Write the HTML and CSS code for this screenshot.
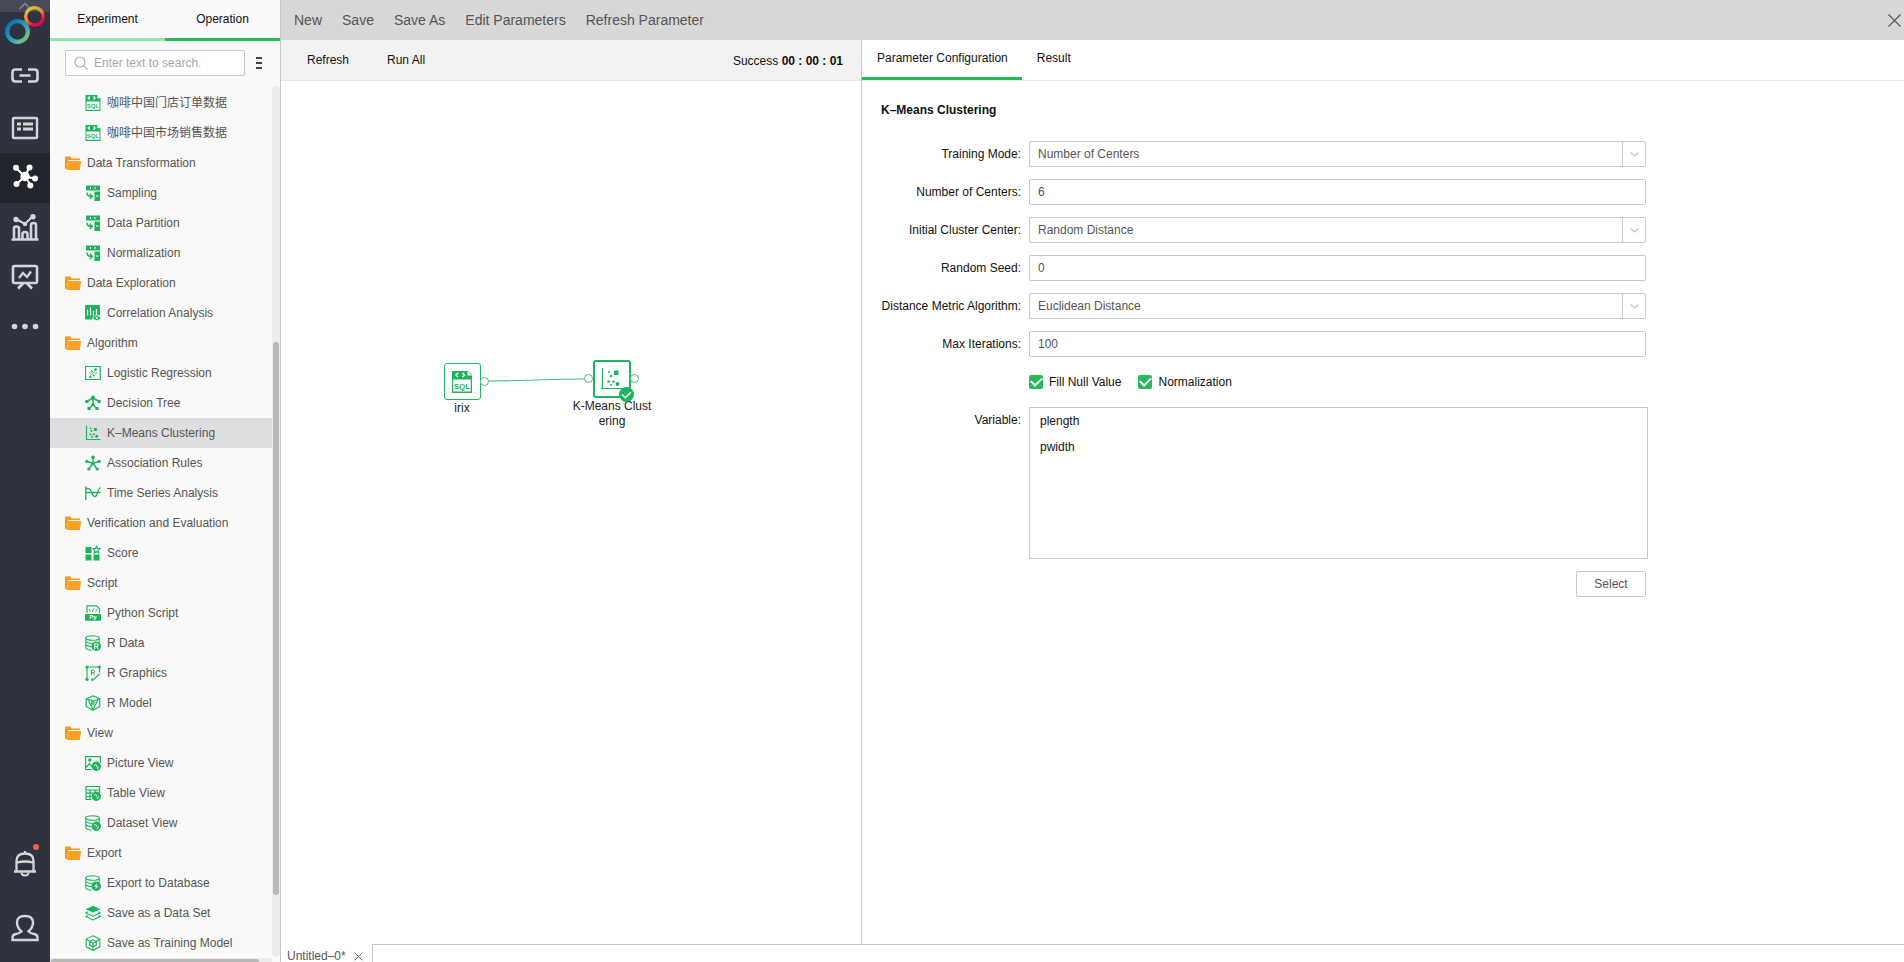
FILE: index.html
```html
<!DOCTYPE html>
<html lang="en">
<head>
<meta charset="utf-8">
<title>Experiment</title>
<link rel="stylesheet" href="styles.css">
</head>
<body>
<svg class="sprite" aria-hidden="true">
  <symbol id="folder" viewBox="0 0 16 16"><path fill="#f59a1a" d="M0 1.500h5.500l1 2H15v1.600H3.500L1.600 14H0z"/><path fill="#ffa01e" d="M3.600 6H16.200l-1.400 9H1.600z"/></symbol>
  <symbol id="sql" viewBox="0 0 16 16"><path fill="#1eb45c" d="M.5 0H12l3.500 3.500V16H.5V0z"/><path fill="#fff" d="M1.500 6.500h13v8.300h-13zM12.300 0l3.200 3.200h-3.200z"/><path d="M4.800 1.500 3.200 3l1.600 1.500M8.500 1.500 10.100 3 8.500 4.500" stroke="#fff" fill="none" stroke-width="1.200"/><text x="8" y="13" text-anchor="middle" class="tiny">SQL</text></symbol>
  <symbol id="transform" viewBox="0 0 16 16"><path fill="#1eb45c" d="M1 .5h14v5H1zM9.500 6.500H15V16H9.500z"/><path stroke="#f9f9f9" d="M5.500 2v2M10 2v2M11 11h2.500"/><path d="M2 7.500c0 3 1.500 4 4.500 4M4.800 8.800l2.500 2.700-2.500 2.500" stroke="#1eb45c" stroke-width="1.500" fill="none"/></symbol>
  <symbol id="correlation" viewBox="0 0 16 16"><path fill="#1eb45c" d="M1 0h13q1 0 1 1V10L8 12l-1 2.500H1q-1 0-1-1V1q0-1 1-1z"/><path stroke="#f9f9f9" d="M2.500 4.500v6M5.500 2.500v8M8.500 6v4.500M11.500 4v6" stroke-width="1.200"/><path fill="#1eb45c" stroke="#f9f9f9" stroke-width=".7" d="M7.500 13q4.300-5 8.500 0-4.200 5-8.500 0z"/><circle cx="11.800" cy="13" r="1" fill="#f9f9f9"/></symbol>
  <symbol id="logistic" viewBox="0 0 16 16" fill="#1eb45c"><path d="M.5 1.500h14.800v13H.5z" fill="none" stroke="#1eb45c" stroke-width="1.200"/><path d="m4 12.500 7.500-8.500" stroke="#1eb45c" fill="none" stroke-width=".8"/><circle cx="5" cy="8" r=".8"/><circle cx="7" cy="6.500" r=".9"/><circle cx="10.500" cy="4.500" r="1.300"/><circle cx="8.500" cy="10.500" r=".9"/><circle cx="11" cy="8" r=".8"/><circle cx="5.500" cy="12" r="1.100"/></symbol>
  <symbol id="tree" viewBox="0 0 16 16"><path d="M8 3 1.800 6.500M8 3l6.200 3.500M8 2v8M8 9.500 4 14M8 9.500l4 4.500" stroke="#1eb45c" stroke-width="1.500" fill="none"/><g fill="#1eb45c"><circle cx="8" cy="2.300" r="1.900"/><circle cx="1.800" cy="6.500" r="1.700"/><circle cx="14.200" cy="6.500" r="1.700"/><circle cx="8" cy="9.500" r="1.600"/><path d="M2.500 12h3v3h-3zM10.500 12h3v3h-3z"/></g></symbol>
  <symbol id="kmeans" viewBox="0 0 16 16" fill="#1eb45c"><path d="M1.500 .500v14H15.500" fill="none" stroke="#1eb45c" stroke-width="1.200"/><path d="M8.800 3h3v3h-3z"/><circle cx="5.600" cy="3.300" r=".9"/><circle cx="6.500" cy="6" r="1"/><circle cx="5.500" cy="9.500" r="1"/><circle cx="8.800" cy="9.300" r="1.100"/><circle cx="7" cy="12" r=".9"/><circle cx="11.800" cy="11.300" r="1.500"/></symbol>
  <symbol id="assoc" viewBox="0 0 16 16"><path d="M8 2v6M1.800 6.500 8 8.300l6.200-1.800M4 14l4-5.700L12 14" stroke="#1eb45c" stroke-width="1.500" fill="none"/><g fill="#1eb45c"><circle cx="8" cy="2.200" r="1.800"/><circle cx="1.800" cy="6.300" r="1.600"/><circle cx="14.200" cy="6.300" r="1.600"/><circle cx="8" cy="8.300" r="1.700"/><circle cx="3.800" cy="14" r="1.600"/><circle cx="12.200" cy="14" r="1.600"/></g></symbol>
  <symbol id="series" viewBox="0 0 16 16"><path d="M.8 1.500v13.500M.8 7.500H15.500M1 4q3.500-2 5.500 3t3.500 4.500q1.500 0 3-5 .8-3 2.500-4" stroke="#1eb45c" stroke-width="1.400" fill="none"/></symbol>
  <symbol id="score" viewBox="0 0 16 16"><path fill="#1eb45c" d="M.5 2h6v6h-6zM.5 9.500h6v6h-6zM8.500 9.500h6v6h-6z"/><path d="m11.500 1.200 1 2.200 2.500.3-1.800 1.700.5 2.400-2.200-1.200-2.200 1.200.5-2.400L8 3.700l2.500-.3z" stroke="#1eb45c" stroke-width="1.200" fill="none"/></symbol>
  <symbol id="python" viewBox="0 0 16 16"><path d="M2 8V.8h9.500L14.500 4v4" stroke="#1eb45c" fill="none" stroke-width="1.200"/><path fill="#1eb45c" d="M0 9h16v6q0 .8-.8.800H.8Q0 15.800 0 15z"/><path d="M5.500 3.800 4 5.300l1.500 1.500M10.500 3.800 12 5.300l-1.500 1.500M8.700 3.500 7.300 7" stroke="#1eb45c" fill="none"/><text x="8" y="14" text-anchor="middle" class="tiny tiny-light">Py</text></symbol>
  <symbol id="db" viewBox="0 0 16 16"><g fill="none" stroke="#1eb45c" stroke-width="1.100"><ellipse cx="7.500" cy="3" rx="6.700" ry="2.300"/><path d="M.8 3v10q1.500 2 5.700 2.200M14.200 3v4.500M.8 6.300q2.200 2.200 6.700 2.200M.8 9.600q1.500 1.900 5.700 2"/></g></symbol>
  <symbol id="rdata" viewBox="0 0 16 16"><use href="#db"/><circle cx="11.200" cy="11.200" r="4.800" fill="#1eb45c"/><path d="M9.700 14V8.700h2q1.500 0 1.500 1.400t-1.500 1.300h-2M11.500 11.400 13.200 14" fill="none" stroke="#f9f9f9" stroke-width="1.100"/></symbol>
  <symbol id="rgraph" viewBox="0 0 16 16"><path d="M2 2h12.500M2 2v12.500M14.500 2v5.500M8.500 14.500 14.500 9" stroke="#1eb45c" fill="none" stroke-width="1.200"/><path d="M6.500 9.800V5.200h1.700q1.300 0 1.300 1.200T8.200 7.600H6.500M8 7.600l1.700 2.200" fill="none" stroke="#1eb45c"/><g fill="#1eb45c"><circle cx="2" cy="2" r="1.600"/><circle cx="14.300" cy="2" r="1.600"/><circle cx="2" cy="14.300" r="1.600"/><circle cx="7.500" cy="14.800" r="1.200"/></g></symbol>
  <symbol id="rmodel" viewBox="0 0 16 16"><g fill="none" stroke="#1eb45c" stroke-width="1.200"><path d="M8 .8 14.800 4v7.500L8 15.300 1.200 11.500V4zM1.200 4 8 5.500 14.800 4M3.200 5l4.800 9.500L12.800 5"/><path d="M6.800 10.500v-4h1.400q1 0 1 1t-1 1H7M8.200 8.600l1.200 1.900"/></g></symbol>
  <symbol id="eye" viewBox="0 0 16 16"><circle cx="11.300" cy="11.300" r="4.700" fill="#1eb45c"/><path d="M9 10.500q1.500-1.500 2.500-.5t-.7 2M12.500 14q-.5-2 1.500-2.500" fill="none" stroke="#f9f9f9" stroke-width=".9"/></symbol>
  <symbol id="picture" viewBox="0 0 16 16"><path d="M6.500 14.500H.6V1.600h14.800V8M1 12.500l3.500-3.800 2.500 3" stroke="#1eb45c" fill="none" stroke-width="1.200"/><circle cx="4.800" cy="5" r="1.700" fill="#1eb45c"/><use href="#eye"/></symbol>
  <symbol id="table" viewBox="0 0 16 16"><path d="M6.500 14.500H1V1.500h13.500V8M1 5h13.500M5 5v9.500M10 5v3M1 8.200h7M1 11.500h5.500" stroke="#1eb45c" fill="none" stroke-width="1.200"/><use href="#eye"/></symbol>
  <symbol id="dataset" viewBox="0 0 16 16"><use href="#db"/><use href="#eye"/></symbol>
  <symbol id="exportdb" viewBox="0 0 16 16"><use href="#db"/><circle cx="11.200" cy="11.200" r="4.800" fill="#1eb45c"/><path d="m11.800 8-2.700 3.600h1.800l-.4 2.900 2.900-3.800h-1.800z" fill="#f9f9f9"/></symbol>
  <symbol id="layers" viewBox="0 0 16 16"><path fill="#1eb45c" d="M8 .8 15.500 4.200 8 7.600.5 4.200z"/><path d="M3 6.800.8 7.900 8 11.200l7.200-3.300L13 6.800M3 10.500l-2.200 1L8 14.900l7.200-3.400-2.200-1" stroke="#1eb45c" stroke-width="1.100" fill="none"/></symbol>
  <symbol id="cube" viewBox="0 0 16 16"><g fill="none" stroke="#1eb45c" stroke-width="1.100"><path d="M8 .8 14.800 4v7.800L8 15.300 1.200 11.800V4zM8 4.800l3.300 1.700v3.600L8 11.800l-3.300-1.700V6.500zM4.700 6.500 8 8.200l3.300-1.700M8 8.200v7M1.200 4l3.500 2.500M14.800 4l-3.500 2.500"/></g></symbol>
</svg>

<div class="app">
  <nav class="rail" aria-label="Main">
    <a class="brand" href="#" aria-label="Home">
      <svg width="50" height="53" viewBox="0 0 50 53">
        <defs>
          <linearGradient id="warm" x1="0.200" y1="0" x2="0.800" y2="1"><stop offset="0" stop-color="#d9c440"/><stop offset="0.450" stop-color="#f08a35"/><stop offset="0.800" stop-color="#e5094f"/><stop offset="1" stop-color="#e5094f"/></linearGradient>
          <linearGradient id="cool" x1="0" y1="0" x2="1" y2="1"><stop offset="0" stop-color="#0e62b0"/><stop offset="0.500" stop-color="#1f9fc4"/><stop offset="1" stop-color="#8fd060"/></linearGradient>
        </defs>
        <path d="M0 0h50v10q0 2-2 2H2q-2 0-2-2z" fill="#484b56"/><path d="m19.500 9 5.500-5.500L30.500 9" stroke="#85878f" stroke-width="1.500" fill="none"/><circle cx="34.500" cy="16.500" r="8.800" fill="none" stroke="url(#warm)" stroke-width="3.400"/><circle cx="17.500" cy="31.500" r="10.300" fill="none" stroke="url(#cool)" stroke-width="4.200"/></svg>
    </a>
    <a class="rail-item" href="#" aria-label="Connections"><svg class="rail-icon" viewBox="0 0 28 28"><path d="M11 5.500H4.500q-3 0-3 3v6q0 3 3 3H11M17 5.500h6.500q3 0 3 3v6q0 3-3 3H17M8.500 11.500h11" stroke-width="2.600"/></svg></a>
    <a class="rail-item" href="#" aria-label="Data sets"><svg class="rail-icon" viewBox="0 0 28 28"><rect x="2" y="4" width="24" height="20" rx="1" stroke-width="2.400"/><path d="M6 10h4M12 10h10M6 15h4M12 15h10" stroke-width="2.800"/></svg></a>
    <a class="rail-item active" href="#" aria-label="Experiments"><svg class="rail-icon" viewBox="0 1 28 28"><path d="M14 13.500 5 5M14 13.500 18 5M14 13.500l9.500 2M14 13.500 5.500 21M14 13.500 19.500 22" stroke-width="2"/><g class="solid"><circle cx="14" cy="13.500" r="4.700"/><circle cx="5" cy="4.800" r="3"/><circle cx="18.500" cy="4.500" r="3"/><circle cx="24" cy="15.500" r="3"/><circle cx="5.500" cy="21" r="3"/><circle cx="19.300" cy="22.500" r="3"/></g></svg></a>
    <a class="rail-item" href="#" aria-label="Reports"><svg class="rail-icon" viewBox="0 1 28 28"><path d="M.5 26.500h27M3 26V15.500q0-2 2.500-2t2.500 2V26M11.500 26v-5q0-2 2.500-2t2.500 2v5M20 26V12q0-2 2.500-2t2.500 2v14" stroke-width="2.600"/><path d="m5 6 9 5 8-8" stroke-width="2.200"/><g class="solid"><circle cx="5" cy="6.500" r="2.700"/><circle cx="14" cy="11" r="2.200"/><circle cx="22" cy="3.700" r="2.700"/></g></svg></a>
    <a class="rail-item" href="#" aria-label="Dashboards"><svg class="rail-icon" viewBox="0 0 28 28"><rect x="2" y="2" width="24" height="17" rx="1.500" stroke-width="2.600"/><path d="m8 14 4-5 4 4 4-5.500" stroke-width="2.400"/><path d="m12 19.500-5 5M16 19.500l5 5" stroke-width="2.600"/></svg></a>
    <a class="rail-item" href="#" aria-label="More"><svg class="rail-icon" viewBox="0 0 28 28"><g class="solid"><circle cx="3.500" cy="12.500" r="2.800"/><circle cx="14" cy="12.500" r="2.800"/><circle cx="24.500" cy="12.500" r="2.800"/></g></svg></a>
    <div class="rail-foot">
      <a class="rail-item tall" href="#" aria-label="Notifications"><svg class="rail-icon" viewBox="0 1 28 28"><path d="M5.500 22.500V13q0-7.500 8.500-7.500T22.500 13v9.500M3 23.500h22M6 14.500q8-2 16 0M14 3v3" stroke-width="2.300"/><path d="M10.500 24.500q0 3 3.500 3t3.500-3" stroke-width="2"/></svg><span class="alert"></span></a>
      <a class="rail-item tall" href="#" aria-label="Account"><svg class="rail-icon" viewBox="0 0 28 28"><path d="M10.500 17.500Q6 13.500 6 8.500 6 2 14 2t8 6.500q0 5-4.500 9 2 2 5.500 2.500 3.500.5 3.500 3.500v2.500H1.500v-2.500Q1.500 20.500 5 20q3.500-.5 5.500-2.500z" stroke-width="2.400"/></svg></a>
    </div>
  </nav>

  <aside class="side">
    <div class="side-tabs">
      <button type="button" class="side-tab">Experiment</button>
      <button type="button" class="side-tab on">Operation</button>
    </div>
    <div class="side-search">
      <label class="search">
        <svg width="14" height="14" viewBox="0 0 14 14" aria-hidden="true"><circle cx="6" cy="6" r="5" fill="none" stroke="#a5a5a5" stroke-width="1.100"/><path d="m9.800 9.800 3.500 3.500" stroke="#a5a5a5" stroke-width="1.100"/></svg>
        <input type="text" placeholder="Enter text to search." aria-label="Search operations">
      </label>
      <button type="button" class="kebab" aria-label="Options"><svg width="6" height="12" viewBox="0 0 6 12"><path d="M0 1h6M0 6h6M0 11h6" stroke="#444" stroke-width="2"/></svg></button>
    </div>
    <div class="tree-wrap">
      <ul class="tree">
        <li><a class="op leaf" href="#"><svg class="ico"><use href="#sql"/></svg>咖啡中国门店订单数据</a></li>
        <li><a class="op leaf" href="#"><svg class="ico"><use href="#sql"/></svg>咖啡中国市场销售数据</a></li>
        <li><a class="op" href="#"><svg class="ico"><use href="#folder"/></svg>Data Transformation</a></li>
        <li><a class="op leaf" href="#"><svg class="ico"><use href="#transform"/></svg>Sampling</a></li>
        <li><a class="op leaf" href="#"><svg class="ico"><use href="#transform"/></svg>Data Partition</a></li>
        <li><a class="op leaf" href="#"><svg class="ico"><use href="#transform"/></svg>Normalization</a></li>
        <li><a class="op" href="#"><svg class="ico"><use href="#folder"/></svg>Data Exploration</a></li>
        <li><a class="op leaf" href="#"><svg class="ico"><use href="#correlation"/></svg>Correlation Analysis</a></li>
        <li><a class="op" href="#"><svg class="ico"><use href="#folder"/></svg>Algorithm</a></li>
        <li><a class="op leaf" href="#"><svg class="ico"><use href="#logistic"/></svg>Logistic Regression</a></li>
        <li><a class="op leaf" href="#"><svg class="ico"><use href="#tree"/></svg>Decision Tree</a></li>
        <li><a class="op leaf picked" href="#"><svg class="ico"><use href="#kmeans"/></svg>K–Means Clustering</a></li>
        <li><a class="op leaf" href="#"><svg class="ico"><use href="#assoc"/></svg>Association Rules</a></li>
        <li><a class="op leaf" href="#"><svg class="ico"><use href="#series"/></svg>Time Series Analysis</a></li>
        <li><a class="op" href="#"><svg class="ico"><use href="#folder"/></svg>Verification and Evaluation</a></li>
        <li><a class="op leaf" href="#"><svg class="ico"><use href="#score"/></svg>Score</a></li>
        <li><a class="op" href="#"><svg class="ico"><use href="#folder"/></svg>Script</a></li>
        <li><a class="op leaf" href="#"><svg class="ico"><use href="#python"/></svg>Python Script</a></li>
        <li><a class="op leaf" href="#"><svg class="ico"><use href="#rdata"/></svg>R Data</a></li>
        <li><a class="op leaf" href="#"><svg class="ico"><use href="#rgraph"/></svg>R Graphics</a></li>
        <li><a class="op leaf" href="#"><svg class="ico"><use href="#rmodel"/></svg>R Model</a></li>
        <li><a class="op" href="#"><svg class="ico"><use href="#folder"/></svg>View</a></li>
        <li><a class="op leaf" href="#"><svg class="ico"><use href="#picture"/></svg>Picture View</a></li>
        <li><a class="op leaf" href="#"><svg class="ico"><use href="#table"/></svg>Table View</a></li>
        <li><a class="op leaf" href="#"><svg class="ico"><use href="#dataset"/></svg>Dataset View</a></li>
        <li><a class="op" href="#"><svg class="ico"><use href="#folder"/></svg>Export</a></li>
        <li><a class="op leaf" href="#"><svg class="ico"><use href="#exportdb"/></svg>Export to Database</a></li>
        <li><a class="op leaf" href="#"><svg class="ico"><use href="#layers"/></svg>Save as a Data Set</a></li>
        <li><a class="op leaf" href="#"><svg class="ico"><use href="#cube"/></svg>Save as Training Model</a></li>
      </ul>
      <div class="vbar"><div class="vthumb"></div></div>
    </div>
    <div class="hbar"><div class="hthumb"></div></div>
  </aside>

  <div class="main">
    <header class="menu">
      <button type="button">New</button>
      <button type="button">Save</button>
      <button type="button">Save As</button>
      <button type="button">Edit Parameters</button>
      <button type="button">Refresh Parameter</button>
      <button type="button" class="close" aria-label="Close"><svg width="13" height="13" viewBox="0 0 13 13"><path d="m.5.5 12 12M12.500.5l-12 12" stroke="#555" stroke-width="1.100"/></svg></button>
    </header>
    <div class="work">
      <section class="flow">
        <div class="flow-bar">
          <button type="button">Refresh</button>
          <button type="button">Run All</button>
          <div class="status">Success <b>00 : 00 : 01</b></div>
        </div>
        <div class="canvas">
          <svg class="edges" width="400" height="400" viewBox="0 0 400 400" aria-hidden="true"><path d="M207 300 C240 300 270 298 304 298" fill="none" stroke="#45c078" stroke-width="1.200"/></svg>
          <div class="node node-irix">
            <div class="box"><svg width="22" height="24" viewBox="0 0 22 24"><path fill="#1eb45c" d="M1 1h16l4 4v18H1z"/><path fill="#fff" d="M2.200 9.500h17.600v12H2.200zM16.500 1v4.500H21z"/><path d="M7 3 5 5l2 2M11.500 3l2 2-2 2" stroke="#fff" stroke-width="1.400" fill="none"/><text x="11" y="18.500" text-anchor="middle" class="small">SQL</text></svg></div>
            <i class="port out"></i>
            <span class="name">irix</span>
          </div>
          <div class="node node-kmeans">
            <div class="box current"><svg width="24" height="24" viewBox="0 0 24 24" fill="#1eb45c"><path d="M2.500 1v21.500M1 21.500h22" stroke="#1eb45c" stroke-width="1.200"/><path d="M14 3.500h4.500V8H14z"/><circle cx="9" cy="5" r="1"/><circle cx="11" cy="9" r="1.200"/><circle cx="8.500" cy="14.500" r="1.200"/><circle cx="13.500" cy="14.500" r="1.200"/><circle cx="11" cy="18" r="1.100"/><circle cx="17.500" cy="17" r="2"/></svg></div>
            <i class="port in"></i><i class="port out"></i>
            <svg class="done" width="15" height="15" viewBox="0 0 15 15"><circle cx="7.500" cy="7.500" r="7.500" fill="#1eb45c"/><path d="m3 7.500 3.300 3.300L12 5" fill="none" stroke="#fff" stroke-width="1.400"/></svg>
            <span class="name">K-Means Clust<br>ering</span>
          </div>
        </div>
      </section>
      <section class="panel">
        <div class="panel-tabs">
          <button type="button" class="panel-tab on">Parameter Configuration</button>
          <button type="button" class="panel-tab">Result</button>
        </div>
        <form class="form">
          <h2>K–Means Clustering</h2>
          <div class="row"><label for="mode">Training Mode:</label><div class="pick"><select id="mode"><option>Number of Centers</option></select><span class="arrow"><svg width="9" height="5" viewBox="0 0 9 5"><path d="m.5.5 4 3.300L8.500.5"/></svg></span></div></div>
          <div class="row"><label for="centers">Number of Centers:</label><input id="centers" class="field" type="text" value="6"></div>
          <div class="row"><label for="initial">Initial Cluster Center:</label><div class="pick"><select id="initial"><option>Random Distance</option></select><span class="arrow"><svg width="9" height="5" viewBox="0 0 9 5"><path d="m.5.5 4 3.300L8.500.5"/></svg></span></div></div>
          <div class="row"><label for="seed">Random Seed:</label><input id="seed" class="field" type="text" value="0"></div>
          <div class="row"><label for="metric">Distance Metric Algorithm:</label><div class="pick"><select id="metric"><option>Euclidean Distance</option></select><span class="arrow"><svg width="9" height="5" viewBox="0 0 9 5"><path d="m.5.5 4 3.300L8.500.5"/></svg></span></div></div>
          <div class="row"><label for="iter">Max Iterations:</label><input id="iter" class="field" type="text" value="100"></div>
          <div class="checks">
            <label><input type="checkbox" checked>Fill Null Value</label>
            <label><input type="checkbox" checked>Normalization</label>
          </div>
          <div class="row top"><span class="caption" id="varcap">Variable:</span><ul class="vars" aria-labelledby="varcap"><li>plength</li><li>pwidth</li></ul></div>
          <div class="actions"><button type="button">Select</button></div>
        </form>
      </section>
    </div>
    <footer class="sheets">
      <div class="sheet">Untitled–0*<button type="button" aria-label="Close tab"><svg width="9" height="9" viewBox="0 0 9 9"><path d="m.5.500 8 8M8.500.500l-8 8" stroke="#777"/></svg></button></div>
      <div class="sheet-rest"></div>
    </footer>
  </div>
</div>
</body>
</html>
```
FILE: styles.css
```css
* { box-sizing: border-box; }
body {
  margin: 0;
  font: 12px/16px "Liberation Sans", "Noto Sans CJK SC", sans-serif;
  color: #111;
  background: #fff;
}
button, input, select { font: inherit; color: inherit; }
button { border: 0; background: none; padding: 0; }
a { color: inherit; text-decoration: none; }
ul { list-style: none; margin: 0; padding: 0; }
.sprite { display: none; }
.tiny { font: bold 6px "Liberation Sans", sans-serif; fill: #1eb45c; }
.tiny-light { fill: #fff; }
.small { font: bold 8px "Liberation Sans", sans-serif; fill: #1eb45c; }

.app { display: flex; height: 100vh; overflow: hidden; }

/* Icon rail */
.rail { flex: none; width: 50px; display: flex; flex-direction: column; background: #30333f; }
.brand { height: 53px; }
.brand svg { display: block; }
.rail-item { position: relative; height: 50px; display: flex; align-items: center; justify-content: center; }
.rail-item.tall { height: 65px; }
.rail-item.active { background: #22252e; }
.rail-icon { width: 28px; height: 28px; fill: none; stroke: #d3d5d9; }
.rail-icon .solid { fill: #d3d5d9; stroke: none; }
.active .rail-icon { stroke: #fff; }
.active .solid { fill: #fff; }
.rail-foot { margin-top: auto; padding-bottom: 2px; }
.alert { position: absolute; right: 11px; top: 14px; width: 6px; height: 6px; border-radius: 50%; background: #f0624d; }

/* Operation list */
.side { flex: none; width: 231px; display: flex; flex-direction: column; background: #f9f9f9; border-right: 1px solid #c8c8c8; }
.side-tabs { display: flex; flex: none; }
.side-tab { flex: 1; height: 41px; border-bottom: 3px solid #93e6ae; }
.side-tab.on { border-color: #28b95a; }
.side-search { flex: none; display: flex; align-items: center; gap: 11px; padding: 9px 15px 10px; }
.search { flex: none; width: 180px; height: 26px; display: flex; align-items: center; gap: 6px; padding: 0 8px; border: 1px solid #c8c8c8; border-radius: 2px; background: #fff; }
.search svg { flex: none; }
.search input { flex: 1; min-width: 0; border: 0; padding: 0; outline: 0; background: none; }
.search input::placeholder { color: #a8a8a8; opacity: 1; }
.kebab { display: flex; }
.tree-wrap { flex: 1; min-height: 0; display: flex; overflow: hidden; }
.tree { flex: 1; min-width: 0; padding-top: 2px; }
.op { height: 30px; display: flex; align-items: center; gap: 6px; padding-left: 15px; white-space: nowrap; color: #555; }
.op.leaf { padding-left: 35px; }
.op.picked { background: #dedee0; }
.ico { flex: none; width: 16px; height: 16px; }
.vbar { flex: none; width: 8px; background: #ececec; border-radius: 4px; display: flex; flex-direction: column; padding: 256px 1px 62px; }
.vthumb { flex: 1; border-radius: 3px; background: #b8b8b8; }
.hbar { flex: none; height: 4px; margin: 1px 8px 0 0; background: #ececec; padding: 1px 13px 0 1px; }
.hthumb { height: 3px; border-radius: 3px 3px 0 0; background: #b8b8b8; }

/* Main area */
.main { flex: 1; min-width: 0; display: flex; flex-direction: column; }
.menu { flex: none; height: 40px; display: flex; align-items: center; gap: 20px; padding: 0 3px 0 13px; background: #d7d7d7; color: #555; font-size: 14px; }
.menu .close { margin-left: auto; display: flex; }
.work { flex: 1; min-height: 0; display: grid; grid-template-columns: minmax(0, 581fr) minmax(0, 1042fr); }
.flow { display: flex; flex-direction: column; border-right: 1px solid #c8c8c8; }
.flow-bar { flex: none; height: 41px; display: flex; align-items: center; gap: 38px; padding: 0 18px 0 26px; background: #f1f1f1; border-bottom: 1px solid #e6e6e6; }
.status { margin-left: auto; padding-top: 2px; }
.canvas { flex: 1; position: relative; overflow: hidden; }
.edges { position: absolute; left: 0; top: 0; }
.node { position: absolute; width: 90px; display: flex; flex-direction: column; align-items: center; }
.node-irix { left: 136px; top: 282px; }
.node-kmeans { left: 286px; top: 279px; }
.box { width: 37px; height: 37px; display: flex; align-items: center; justify-content: center; border: 1px solid #1eb45c; border-radius: 3px; background: #fff; }
.box.current { width: 38px; height: 38px; border-width: 2px; }
.port { position: absolute; top: 14px; width: 9px; height: 9px; border: 1px solid #45c078; border-radius: 50%; background: #fff; }
.port.in { left: 17px; }
.port.out { right: 18px; }
.done { position: absolute; left: 52px; top: 27px; }
.name { padding-top: 1px; text-align: center; line-height: 15px; color: #222; white-space: nowrap; }

/* Parameter panel */
.panel { min-width: 0; }
.panel-tabs { display: flex; height: 41px; border-bottom: 1px solid #ebebeb; }
.panel-tab { height: 40px; padding: 0 14px 2px 15px; border-bottom: 3px solid transparent; }
.panel-tab.on { border-color: #28b95a; }
.form { max-width: 786px; padding: 21px 0 0 19px; display: grid; gap: 12px; }
.form h2 { margin: 0 0 10px; font-size: 12px; line-height: 17px; font-weight: bold; }
.row { display: grid; grid-template-columns: 140px minmax(0, 1fr); column-gap: 8px; align-items: center; padding-right: 2px; }
.row label, .caption { text-align: right; white-space: nowrap; }
.field, .pick select { width: 100%; height: 26px; padding: 0 8px; border: 1px solid #c8c8c8; border-radius: 2px; background: #fff; color: #555; outline: 0; }
.pick { position: relative; }
.pick select { display: block; appearance: none; }
.arrow { position: absolute; right: 0; top: 0; width: 24px; height: 26px; display: flex; align-items: center; justify-content: center; border-left: 1px solid #c8c8c8; pointer-events: none; }
.arrow path { fill: none; stroke: #c8c8c8; stroke-width: 1.3; }
.checks { display: flex; gap: 17px; padding-left: 148px; height: 26px; align-items: center; }
.checks label { display: flex; align-items: center; gap: 6px; }
.checks input { appearance: none; width: 14px; height: 14px; margin: 0; border-radius: 2px; background: #28b95a; display: grid; place-items: center; }
.checks input::before { content: ""; width: 9px; height: 5px; margin-top: -3px; border: solid #fff; border-width: 0 0 2px 2px; transform: rotate(-45deg); }
.row.top { align-items: start; padding-right: 0; }
.caption { padding-top: 5px; }
.vars { height: 152px; border: 1px solid #c8c8c8; padding: 0 10px; }
.vars li { line-height: 26px; }
.actions { display: flex; justify-content: flex-end; padding-right: 2px; }
.actions button { width: 70px; height: 26px; border: 1px solid #c8c8c8; border-radius: 2px; color: #555; }

/* Sheet tabs */
.sheets { flex: none; height: 18px; display: flex; overflow: hidden; }
.sheet { flex: none; width: 91px; display: flex; align-items: flex-start; padding: 6px 0 0 6px; gap: 8px; line-height: 12px; color: #555; white-space: nowrap; }
.sheet button { display: flex; padding-top: 2px; }
.sheet-rest { flex: 1; border: solid #c8c8c8; border-width: 1px 0 0 1px; }
```
